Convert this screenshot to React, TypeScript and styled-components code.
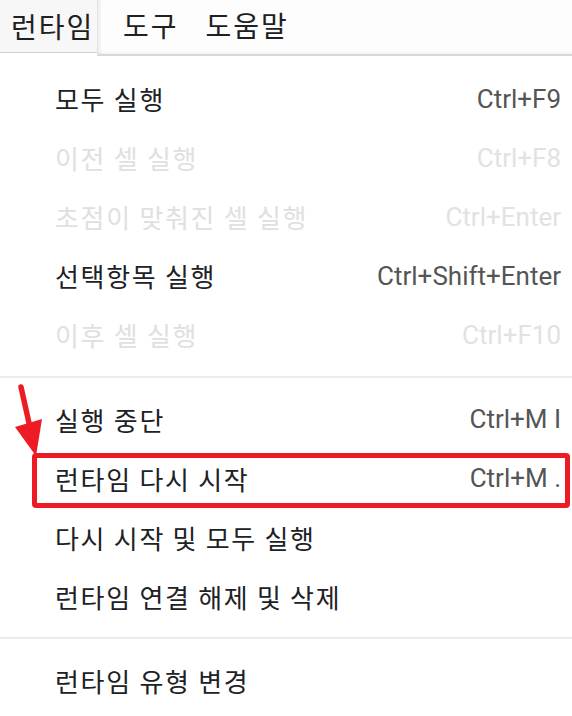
import React from "react";
import styled, { createGlobalStyle } from "styled-components";

const Global = createGlobalStyle`
  html, body { margin: 0; padding: 0; background: #ffffff; }
  body { font-family: "Noto Sans CJK KR", "Noto Sans", sans-serif; }
`;

const Page = styled.div`
  position: relative;
  width: 572px;
  height: 716px;
  overflow: hidden;
  background: #ffffff;
`;

const Header = styled.div`
  display: flex;
  align-items: flex-start;
  height: 56px;
`;

const ActiveTab = styled.div`
  width: 97px;
  height: 53px;
  box-sizing: border-box;
  padding-left: 11px;
  display: flex;
  align-items: center;
  background: #f7f7f7;
  border-bottom: 1px solid #d2d2d2;
  font-size: 28px;
  letter-spacing: 2px;
  color: #202020;
`;

const RestBar = styled.div`
  flex: 1;
  height: 56px;
  box-sizing: border-box;
  display: flex;
  align-items: center;
  gap: 27px;
  padding: 0 0 4px 25px;
  background: #fdfdfd;
  border-left: 1px solid #e4e4e4;
  border-bottom: 2px solid #d9d9d9;
  box-shadow: inset 3px 0 3px -1px rgba(0, 0, 0, 0.07), inset 0 -3px 3px -2px rgba(0, 0, 0, 0.06);
`;

const BarItem = styled.span`
  font-size: 28px;
  letter-spacing: 2px;
  color: #202020;
  line-height: 1;
`;

const Dropdown = styled.div`
  padding-top: 13px;
`;

const Row = styled.div<{ $disabled?: boolean }>`
  height: 59px;
  display: flex;
  align-items: center;
  justify-content: space-between;
  padding: 0 11px 0 55px;
  color: ${(p) => (p.$disabled ? "#e0e0e0" : "#202124")};
`;

const Label = styled.span`
  font-size: 26px;
  letter-spacing: 1.7px;
`;

const Shortcut = styled.span<{ $disabled?: boolean }>`
  font-family: Roboto, "Liberation Sans", sans-serif;
  font-size: 26px;
  color: ${(p) => (p.$disabled ? "#e2e2e2" : "#555555")};
`;

const Separator = styled.div`
  height: 2px;
  background: #ebebeb;
  margin: 11.5px 0 12px;
`;

const HighlightBox = styled.div`
  position: absolute;
  left: 32px;
  top: 453px;
  width: 538px;
  height: 55px;
  box-sizing: border-box;
  border: 5px solid #ed1c24;
  border-radius: 4px;
  pointer-events: none;
`;

const ArrowSvg = styled.svg`
  position: absolute;
  left: 0;
  top: 370px;
  width: 60px;
  height: 100px;
  pointer-events: none;
`;

type Item = { label: string; shortcut?: string; disabled?: boolean };

const groups: Item[][] = [
  [
    { label: "모두 실행", shortcut: "Ctrl+F9" },
    { label: "이전 셀 실행", shortcut: "Ctrl+F8", disabled: true },
    { label: "초점이 맞춰진 셀 실행", shortcut: "Ctrl+Enter", disabled: true },
    { label: "선택항목 실행", shortcut: "Ctrl+Shift+Enter" },
    { label: "이후 셀 실행", shortcut: "Ctrl+F10", disabled: true },
  ],
  [
    { label: "실행 중단", shortcut: "Ctrl+M I" },
    { label: "런타임 다시 시작", shortcut: "Ctrl+M ." },
    { label: "다시 시작 및 모두 실행" },
    { label: "런타임 연결 해제 및 삭제" },
  ],
  [{ label: "런타임 유형 변경" }],
];

export default function App() {
  return (
    <Page>
      <Global />
      <Header>
        <ActiveTab>런타임</ActiveTab>
        <RestBar>
          <BarItem>도구</BarItem>
          <BarItem>도움말</BarItem>
        </RestBar>
      </Header>
      <Dropdown>
        {groups.map((g, gi) => (
          <React.Fragment key={gi}>
            {gi > 0 && <Separator />}
            {g.map((it) => (
              <Row key={it.label} $disabled={it.disabled}>
                <Label>{it.label}</Label>
                {it.shortcut && <Shortcut $disabled={it.disabled}>{it.shortcut}</Shortcut>}
              </Row>
            ))}
          </React.Fragment>
        ))}
      </Dropdown>
      <HighlightBox />
      <ArrowSvg viewBox="0 0 60 100">
        <line x1="21" y1="17" x2="31" y2="62" stroke="#ed1c24" strokeWidth="5.5" strokeLinecap="round" />
        <polygon points="15,57 42,49 36,86" fill="#ed1c24" />
      </ArrowSvg>
    </Page>
  );
}
